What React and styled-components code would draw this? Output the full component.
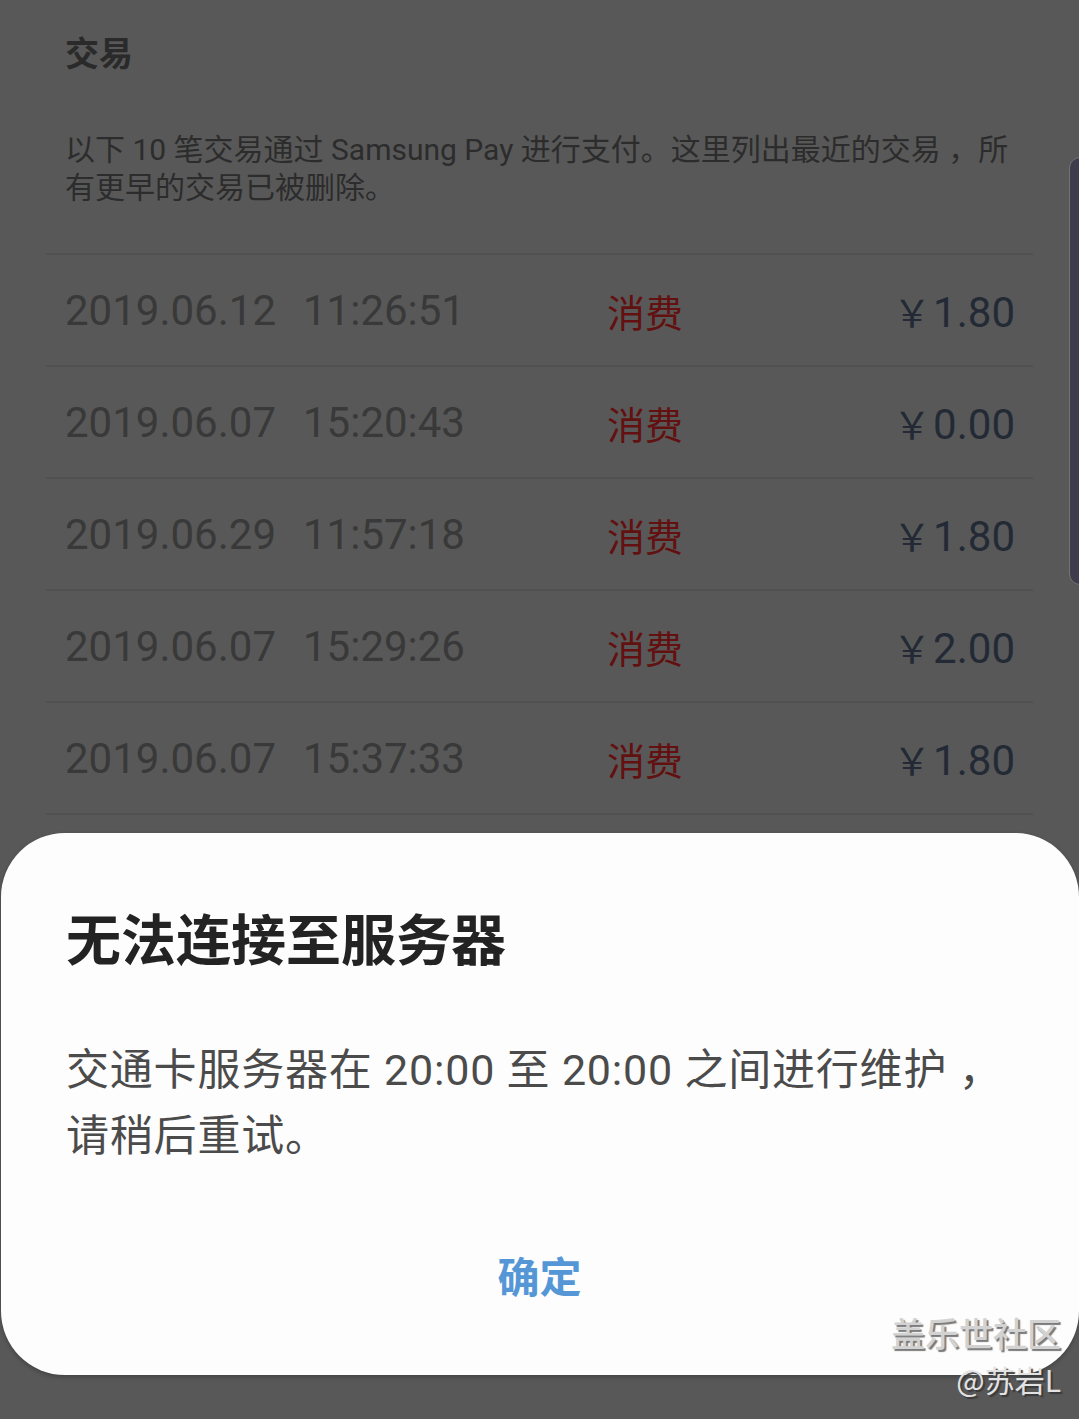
import React from 'react';
import styled, { createGlobalStyle } from 'styled-components';

const GlobalStyle = createGlobalStyle`
  html, body {
    margin: 0;
    padding: 0;
    background: #585858;
  }
  body {
    font-family: Roboto, "Noto Sans CJK SC", sans-serif;
  }
`;

const Page = styled.div`
  position: relative;
  width: 1079px;
  height: 1419px;
  overflow: hidden;
  background: #585858;
`;

const Header = styled.div`
  padding: 29px 60px 0 65px;
`;

const Title = styled.h1`
  margin: 0;
  font-family: "Noto Sans CJK SC", sans-serif;
  font-size: 34px;
  font-weight: 700;
  line-height: 46px;
  color: #2a2a2a;
`;

const Intro = styled.p`
  margin: 56px 0 0;
  font-family: Roboto, "Noto Sans CJK SC", sans-serif;
  font-size: 30px;
  line-height: 38px;
  color: #2c2c2c;
`;

const List = styled.div`
  margin: 46px 46px 0;
`;

const Row = styled.div`
  display: grid;
  grid-template-columns: 238px 304px 1fr auto;
  align-items: center;
  height: 110px;
  padding: 0 18px 0 19px;
  border-top: 2px solid #505050;
`;

const Stamp = styled.span`
  font-family: Roboto, sans-serif;
  font-size: 42px;
  color: #393939;
`;

const Kind = styled.span`
  font-family: "Noto Sans CJK SC", sans-serif;
  font-size: 38px;
  color: #621010;
`;

const Amount = styled.span`
  font-family: Roboto, "Noto Sans CJK SC", sans-serif;
  font-size: 42px;
  color: #232a35;
  display: flex;
  align-items: baseline;
  gap: 2px;
`;

const Yen = styled.span`
  font-family: "Noto Sans CJK SC", sans-serif;
  font-size: 38px;
`;

const ScrollThumb = styled.div`
  position: absolute;
  top: 157px;
  right: -12px;
  width: 22px;
  height: 428px;
  box-sizing: border-box;
  background: #3f3d4b;
  border: 1px solid #747474;
  border-radius: 12px;
`;

const Dialog = styled.div`
  position: absolute;
  top: 833px;
  left: 1px;
  width: 1078px;
  height: 542px;
  box-sizing: border-box;
  background: #fdfdfd;
  border-radius: 64px;
  box-shadow: 0 2px 4px rgba(0, 0, 0, 0.25);
  padding: 66px 60px 0 65px;
  display: flex;
  flex-direction: column;
`;

const DialogTitle = styled.h2`
  margin: 0;
  font-family: "Noto Sans CJK SC", sans-serif;
  font-size: 55px;
  font-weight: 700;
  line-height: 74px;
  color: #232323;
`;

const DialogBody = styled.p`
  margin: 64px 0 0;
  font-family: Roboto, "Noto Sans CJK SC", sans-serif;
  font-size: 43px;
  line-height: 66px;
  letter-spacing: 0.8px;
  color: #4b4b4b;
`;

const Actions = styled.div`
  display: flex;
  justify-content: center;
  margin-top: 78px;
  padding-right: 6px;
`;

const ConfirmButton = styled.button`
  border: none;
  background: none;
  padding: 0;
  font-family: "Noto Sans CJK SC", sans-serif;
  font-size: 42px;
  font-weight: 700;
  line-height: 56px;
  color: #5597d6;
  cursor: pointer;
`;

const Watermark = styled.div`
  position: absolute;
  right: 18px;
  bottom: 24px;
  display: flex;
  flex-direction: column;
  align-items: flex-end;
  gap: 12px;
  font-family: "Noto Sans CJK SC", sans-serif;
  color: #d2d2d2;
  text-shadow: 2px 2px 1px #7a7a7a;
`;

const MarkSite = styled.span`
  font-size: 34px;
  font-weight: 500;
  line-height: 36px;
`;

const MarkUser = styled.span`
  font-size: 30px;
  line-height: 32px;
  color: #e2e2e2;
  text-shadow: 2px 2px 1px #3a3a3a;
`;

const transactions = [
  { date: '2019.06.12', time: '11:26:51', amount: '1.80' },
  { date: '2019.06.07', time: '15:20:43', amount: '0.00' },
  { date: '2019.06.29', time: '11:57:18', amount: '1.80' },
  { date: '2019.06.07', time: '15:29:26', amount: '2.00' },
  { date: '2019.06.07', time: '15:37:33', amount: '1.80' },
  { date: '2019.06.07', time: '15:40:12', amount: '1.80' },
];

function App() {
  return (
    <Page>
      <GlobalStyle />
      <Header>
        <Title>交易</Title>
        <Intro>
          以下 10 笔交易通过 Samsung Pay 进行支付。这里列出最近的交易 ，所
          <br />
          有更早的交易已被删除。
        </Intro>
      </Header>
      <List>
        {transactions.map((t, i) => (
          <Row key={i}>
            <Stamp>{t.date}</Stamp>
            <Stamp>{t.time}</Stamp>
            <Kind>消费</Kind>
            <Amount>
              <Yen>￥</Yen>
              {t.amount}
            </Amount>
          </Row>
        ))}
      </List>
      <ScrollThumb />
      <Dialog>
        <DialogTitle>无法连接至服务器</DialogTitle>
        <DialogBody>
          交通卡服务器在 20:00 至 20:00 之间进行维护 ，
          <br />
          请稍后重试。
        </DialogBody>
        <Actions>
          <ConfirmButton>确定</ConfirmButton>
        </Actions>
      </Dialog>
      <Watermark>
        <MarkSite>盖乐世社区</MarkSite>
        <MarkUser>@苏岩L</MarkUser>
      </Watermark>
    </Page>
  );
}

export default App;
